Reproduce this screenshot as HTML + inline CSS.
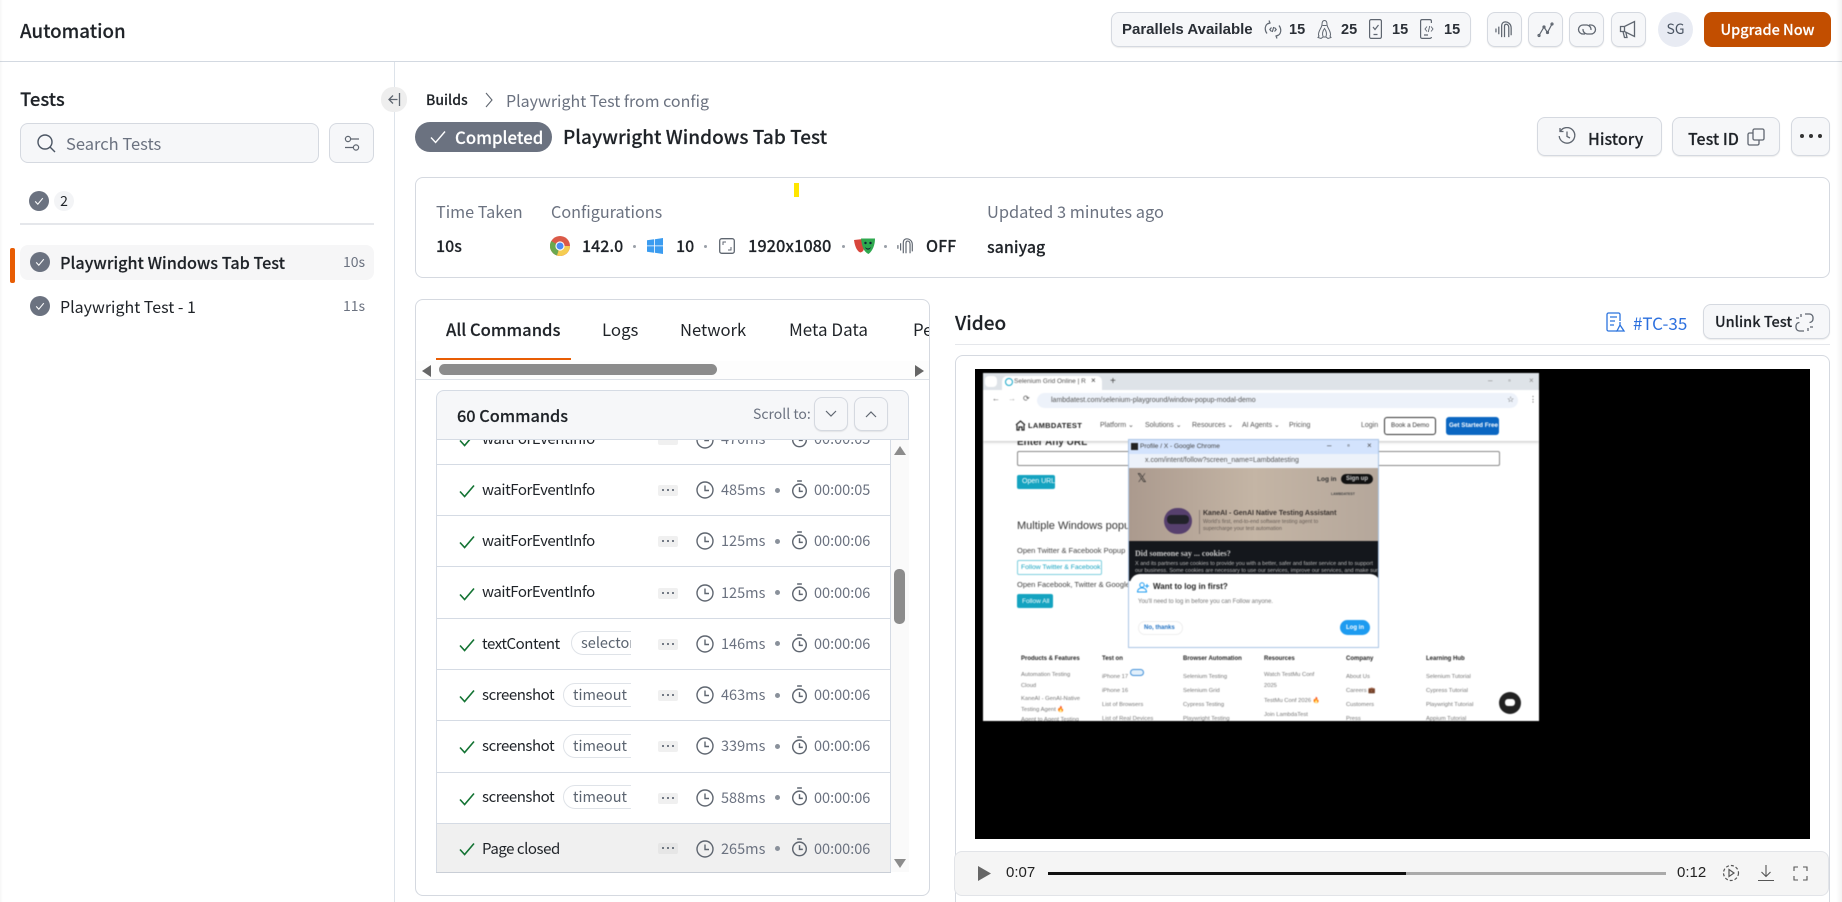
<!DOCTYPE html>
<html lang="en"><head><meta charset="utf-8"><title>Automation</title>
<style>
html,body{margin:0;padding:0;background:#fff;width:1842px;height:902px;overflow:hidden}
#root{position:absolute;left:0;top:0;width:1842px;height:902px;overflow:hidden;font-family:"Noto Sans CJK SC","Liberation Sans",sans-serif;color:#1f2328}
.a,.t,svg.i{position:absolute}
.t{white-space:nowrap;line-height:24px;height:24px;font-size:16px}
.m{font-weight:500;-webkit-text-stroke:.15px currentColor}
.g{color:#6b7280}
.n{font-size:15px;letter-spacing:-.45px}
.d{font-size:14.5px}
.box{position:absolute;box-sizing:border-box;border:1px solid #d5d9e0;border-radius:8px;background:#f6f7f9;box-shadow:0 1px 1px rgba(0,0,0,.08)}
.card{position:absolute;box-sizing:border-box;border:1px solid #d5d9e0;border-radius:8px;background:#fff}
.sep{position:absolute;left:436px;width:454px;height:1px;background:#d5dbe4}
.chip{position:absolute;height:24px;overflow:hidden}
.chip div{box-sizing:border-box;width:100px;height:24px;border:1px solid #dfe3e8;border-radius:12px;font-size:14.5px;line-height:22px;padding-left:9px;color:#5b6470}
.pill{position:absolute;left:658px;width:20px;height:11px;background:#f0f0f0;border-radius:2px}
.pill i{position:absolute;top:4px;width:2px;height:2px;border-radius:1px;background:#4b5563}
.bul{position:absolute;left:775px;width:5px;height:5px;border-radius:50%;background:#8a919b}
.v{font-family:"Liberation Sans",sans-serif;position:absolute;white-space:nowrap;line-height:1.1}
.pn{font-family:"Liberation Sans",sans-serif;position:absolute;top:21px;font-size:14.5px;font-weight:700;color:#2a2f36;line-height:18px}
</style></head><body><div id="root">
<svg width="0" height="0" style="position:absolute">
<symbol id="chk" viewBox="0 0 20 20"><circle cx="10" cy="10" r="10" fill="#6b7280"/><path d="M6.2 10.4l2.6 2.8 5-6" fill="none" stroke="#fff" stroke-width="1.1"/></symbol>
<symbol id="ok" viewBox="0 0 16 14"><path d="M1 7.5l4.6 5L15 1.5" fill="none" stroke="#137333" stroke-width="1.6"/></symbol>
<symbol id="clk" viewBox="0 0 18 18"><circle cx="9" cy="9" r="8" fill="none" stroke="#5f6670" stroke-width="1.4"/><path d="M9 4.5V9.5H13" fill="none" stroke="#5f6670" stroke-width="1.4"/></symbol>
<symbol id="tmr" viewBox="0 0 18 20"><circle cx="9" cy="11.5" r="7.2" fill="none" stroke="#5f6670" stroke-width="1.5"/><path d="M6.5 1h5M9 7.5V12h3.5" fill="none" stroke="#5f6670" stroke-width="1.5"/></symbol>
<symbol id="tun" viewBox="0 0 20 20"><g fill="none" stroke="#5f6670" stroke-width="1.3"><path d="M1 9v4M4 7v8M7 18V6.5C7 3 9 2 11 2s6 1.500 6 6.500V16M10 18V6.500C10 5 11 4.500 12 4.500s2.500 1 2.500 3.500V18"/></g></symbol>
</svg>

<!-- header -->
<div class="a" style="left:0;top:61px;width:1842px;height:1px;background:#d3d9e1"></div>
<div class="t m" style="left:20px;top:19px;font-size:18.7px">Automation</div>
<div class="box" style="left:1111px;top:12px;width:360px;height:35px;border-radius:8px"></div>
<div class="pn" style="left:1122px;font-size:15px">Parallels Available</div>
<svg class="i" style="left:1264px;top:19px" width="18" height="21" viewBox="0 0 18 20" fill="none" stroke="#5f6670" stroke-width="1.2"><path d="M3 14C0 10 1 5 5 3.500M5 1l1 2.500-2.500 1M15 6c3 4 2 9-2 10.500M13 19l-1-2.500 2.500-1M7.500 8L5.800 10l1.700 2M10.500 8L12.200 10l-1.700 2M9.700 7.500L8.300 12.500"/></svg>
<div class="pn" style="left:1289px">15</div>
<svg class="i" style="left:1317px;top:19px" width="15" height="21" viewBox="0 0 15 20" fill="none" stroke="#5f6670" stroke-width="1"><path d="M7.500 1C5.500 1 5 3 5 5c0 3-3.500 6-3.500 10 0 1 .5 1.500.5 1.500L1 18l3 1 2-1.500h3l2 1.500 3-1-1-1.500s.5-.5.5-1.500c0-4-3.500-7-3.500-10 0-2-.5-4-2.500-4z"/><path d="M5.500 6h4M6 17c-1-3 0-6 1.500-8 1.500 2 2.500 5 1.500 8"/></svg>
<div class="pn" style="left:1341px">25</div>
<svg class="i" style="left:1369px;top:19px" width="13" height="20" viewBox="0 0 13 20" fill="none" stroke="#5f6670" stroke-width="1.2"><rect x=".6" y=".6" width="11.800" height="18.800" rx="1.500"/><path d="M4 8l2 2.500 3.500-4.500M4.500 15.500h4"/></svg>
<div class="pn" style="left:1392px">15</div>
<svg class="i" style="left:1420px;top:19px" width="14" height="20" viewBox="0 0 14 20" fill="none" stroke="#5f6670" stroke-width="1.2"><path d="M10 .6H2A1.500 1.500 0 0 0 .6 2v16A1.500 1.500 0 0 0 2 19.400h8A1.500 1.500 0 0 0 11.400 18M11.400 4V2A1.500 1.500 0 0 0 10 .6M4 16h4"/><path d="M7 7.500L5 10l2 2.500M11 7.500l2 2.500-2 2.500M9.700 7l-1.400 6" stroke-width=".9"/></svg>
<div class="pn" style="left:1444px">15</div>

<div class="box" style="left:1487px;top:12px;width:35px;height:35px"></div>
<div class="box" style="left:1528px;top:12px;width:35px;height:35px"></div>
<div class="box" style="left:1569px;top:12px;width:35px;height:35px"></div>
<div class="box" style="left:1611px;top:12px;width:35px;height:35px"></div>
<svg class="i" style="left:1495px;top:20px" width="19" height="19"><use href="#tun"/></svg>
<svg class="i" style="left:1537px;top:21px" width="17" height="17" viewBox="0 0 17 17" fill="none" stroke="#5f6670" stroke-width="1.200"><path d="M2 14.500L7 6l3.500 5.500L15 3"/><circle cx="2" cy="14.500" r="1"/><circle cx="7" cy="6" r="1"/><circle cx="10.500" cy="11.500" r="1"/><circle cx="15" cy="3" r="1"/></svg>
<svg class="i" style="left:1577px;top:22px" width="20" height="15" viewBox="0 0 20 15" fill="none" stroke="#5f6670" stroke-width="1.300"><path d="M8 12H6A4.500 4.500 0 0 1 6 3h4a4.500 4.500 0 0 1 4 5"/><path d="M12 3h2a4.500 4.500 0 0 1 0 9h-4a4.500 4.500 0 0 1-4-5"/></svg>
<svg class="i" style="left:1619px;top:20px" width="20" height="19" viewBox="0 0 20 19" fill="none" stroke="#5f6670" stroke-width="1.300"><path d="M1.500 6.500v5h4l10 5V1.500l-10 5zM5.500 6.500v5M4 11.500l1.500 6h2.500L6.800 12"/></svg>

<div class="a" style="left:1658px;top:12px;width:35px;height:35px;border-radius:50%;background:#e8ebf3"></div>
<div class="t g" style="left:1658px;top:17px;width:35px;text-align:center;font-size:14px;color:#4b5563">SG</div>
<div class="a" style="left:1704px;top:12px;width:127px;height:35px;background:#c24e00;border-radius:8px"></div>
<div class="t m" style="left:1704px;top:18px;width:127px;text-align:center;color:#fff;font-size:14.500px">Upgrade Now</div>

<!-- sidebar -->
<div class="a" style="left:394px;top:62px;width:1px;height:840px;background:#dde3ea"></div>
<div class="t m" style="left:20px;top:87px;font-size:18.5px">Tests</div>
<div class="a" style="left:381px;top:87px;width:26px;height:25px;border-radius:12px;background:#eeeeee"></div>
<svg class="i" style="left:388px;top:93px" width="13" height="13" viewBox="0 0 13 13" fill="none" stroke="#5f6670" stroke-width="1.300"><path d="M11.500 0v13M9.500 6.500H1M5 2.500l-4 4 4 4"/></svg>
<div class="box" style="left:20px;top:123px;width:299px;height:40px;box-shadow:none"></div>
<svg class="i" style="left:36px;top:133px" width="20" height="20" viewBox="0 0 20 20" fill="none" stroke="#4b5563" stroke-width="1.400"><circle cx="9" cy="9" r="7"/><path d="M14 14l5 5"/></svg>
<div class="t g" style="left:66px;top:131px;font-size:16.5px">Search Tests</div>
<div class="box" style="left:329px;top:123px;width:45px;height:40px;box-shadow:none"></div>
<svg class="i" style="left:344px;top:135px" width="16" height="17" viewBox="0 0 16 17" fill="none" stroke="#5f6670" stroke-width="1.200"><circle cx="4" cy="4" r="2.600"/><path d="M7 4h8M1 12.500h8"/><circle cx="12" cy="12.500" r="2.600"/></svg>
<svg class="i" style="left:29px;top:191px" width="20" height="20"><use href="#chk"/></svg>
<div class="a" style="left:54px;top:191px;width:20px;height:20px;border-radius:50%;background:#f3f4f6"></div>
<div class="t" style="left:54px;top:189px;width:20px;text-align:center;font-size:14px">2</div>
<div class="a" style="left:20px;top:223px;width:354px;height:2px;background:#e5e7eb"></div>

<div class="a" style="left:20px;top:245px;width:354px;height:35px;border-radius:8px;background:#f6f6f7"></div>
<div class="a" style="left:10px;top:248px;width:5px;height:35px;border-radius:2px;background:#e85d04"></div>
<svg class="i" style="left:30px;top:252px" width="20" height="20"><use href="#chk"/></svg>
<div class="t m" style="left:60px;top:250px;font-size:16.2px">Playwright Windows Tab Test</div>
<div class="t g" style="left:343px;top:250px;font-size:14px">10s</div>
<svg class="i" style="left:30px;top:296px" width="20" height="20"><use href="#chk"/></svg>
<div class="t" style="left:60px;top:294px">Playwright Test - 1</div>
<div class="t g" style="left:343px;top:294px;font-size:14px">11s</div>

<!-- title area -->
<div class="t m" style="left:426px;top:88px;font-size:14px">Builds</div>
<svg class="i" style="left:485px;top:92px" width="8" height="16" viewBox="0 0 8 16" fill="none" stroke="#5f6670" stroke-width="1.100"><path d="M1 1l6 7-6 7"/></svg>
<div class="t g" style="left:506px;top:88px">Playwright Test from config</div>
<div class="a" style="left:415px;top:122px;width:137px;height:30px;border-radius:15px;background:#6b7280"></div>
<svg class="i" style="left:430px;top:130px" width="16" height="14" viewBox="0 0 16 14" fill="none" stroke="#fff" stroke-width="1.400"><path d="M1 7.500l4.600 5L15 1.500"/></svg>
<div class="t m" style="left:455px;top:125px;color:#fff;font-size:16.8px">Completed</div>
<div class="t m" style="left:563px;top:125px;font-size:19px">Playwright Windows Tab Test</div>

<div class="box" style="left:1537px;top:117px;width:125px;height:39px"></div>
<svg class="i" style="left:1558px;top:127px" width="18" height="18" viewBox="0 0 18 18" fill="none" stroke="#5f6670" stroke-width="1.300"><path d="M2.500 4A7.800 7.800 0 1 1 1.200 9M2 1v3.500h3.500M9 4.500v5l3 1.500"/></svg>
<div class="t m" style="left:1588px;top:126px">History</div>
<div class="box" style="left:1672px;top:117px;width:108px;height:39px"></div>
<div class="t m" style="left:1688px;top:126px">Test ID</div>
<svg class="i" style="left:1747px;top:128px" width="18" height="18" viewBox="0 0 18 18" fill="none" stroke="#5f6670" stroke-width="1.300"><rect x="6" y="1" width="11" height="11" rx="1.500"/><path d="M6 5H2.500A1.500 1.500 0 0 0 1 6.500v9A1.500 1.500 0 0 0 2.500 17h8a1.500 1.500 0 0 0 1.500-1.500V12"/></svg>
<div class="box" style="left:1791px;top:117px;width:39px;height:39px"></div>
<div class="a" style="left:1800px;top:134px;width:4px;height:4px;border-radius:50%;background:#333"></div>
<div class="a" style="left:1809px;top:134px;width:4px;height:4px;border-radius:50%;background:#333"></div>
<div class="a" style="left:1818px;top:134px;width:4px;height:4px;border-radius:50%;background:#333"></div>

<!-- config card -->
<div class="card" style="left:415px;top:177px;width:1415px;height:101px"></div>
<div class="a" style="left:794px;top:183px;width:5px;height:14px;background:#ffe600"></div>
<div class="t g" style="left:436px;top:199px;font-size:16.2px">Time Taken</div>
<div class="t g" style="left:551px;top:199px;font-size:16.2px">Configurations</div>
<div class="t g" style="left:987px;top:199px;font-size:16.4px">Updated 3 minutes ago</div>
<div class="t m" style="left:436px;top:233px">10s</div>
<svg class="i" style="left:550px;top:236px" width="20" height="20" viewBox="0 0 20 20"><circle cx="10" cy="10" r="10" fill="#db5a48"/><path d="M10 10L1.200 5A10 10 0 0 0 7 19.500z" fill="#6aa84f"/><path d="M10 10L7 19.500A10 10 0 0 0 20 10z" fill="#f5cd52"/><circle cx="10" cy="10" r="4.600" fill="#fff"/><circle cx="10" cy="10" r="3.500" fill="#4c8bf5"/></svg>
<div class="t m" style="left:582px;top:233px">142.0</div>
<div class="a" style="left:633px;top:245px;width:3px;height:3px;border-radius:50%;background:#9aa0a8"></div>
<svg class="i" style="left:647px;top:238px" width="16" height="16" viewBox="0 0 16 16" fill="#3b9cf0"><path d="M0 2.300L7 1.300V7.500H0zM7.800 1.200L16 0V7.500H7.800zM0 8.300H7V14.700L0 13.700zM7.800 8.300H16V16L7.800 14.800z"/></svg>
<div class="t m" style="left:676px;top:233px">10</div>
<div class="a" style="left:704px;top:245px;width:3px;height:3px;border-radius:50%;background:#9aa0a8"></div>
<svg class="i" style="left:719px;top:238px" width="16" height="16" viewBox="0 0 16 16" fill="none" stroke="#5f6670" stroke-width="1.300"><rect x=".7" y=".7" width="14.600" height="14.600" rx="2"/><path d="M4 7V4h3M12 9v3H9" stroke-width="1"/></svg>
<div class="t m" style="left:748px;top:233px;font-size:16.4px">1920x1080</div>
<div class="a" style="left:842px;top:245px;width:3px;height:3px;border-radius:50%;background:#9aa0a8"></div>
<svg class="i" style="left:854px;top:237px" width="21" height="18" viewBox="0 0 21 18"><path d="M0 3l9-1 1 9c0 3-2 4-3.500 4.500C4 15 1 11 0 3z" fill="#d8453b"/><path d="M7 1.500l14 0c0 6-2 12-6.500 15.500C10 15 8 10 7 1.500z" fill="#2fa84f"/><circle cx="11.500" cy="6" r="1.200" fill="#123"/><circle cx="16.500" cy="6" r="1.200" fill="#123"/><path d="M11 10c2 2 4 2 6 0-1 3.500-5 3.500-6 0z" fill="#123"/></svg>
<div class="a" style="left:884px;top:245px;width:3px;height:3px;border-radius:50%;background:#9aa0a8"></div>
<svg class="i" style="left:897px;top:237px" width="18" height="18"><use href="#tun"/></svg>
<div class="t m" style="left:926px;top:233px">OFF</div>
<div class="t m" style="left:987px;top:234px">saniyag</div>

<!-- commands panel -->
<div class="card" style="left:415px;top:299px;width:515px;height:597px"></div>
<div class="t m" style="left:446px;top:317px;font-size:16.6px">All Commands</div>
<div class="t" style="left:602px;top:317px;font-size:16.8px">Logs</div>
<div class="t" style="left:680px;top:317px;font-size:16.6px">Network</div>
<div class="t" style="left:789px;top:317px;font-size:17px">Meta Data</div>
<div class="a" style="left:913px;top:317px;width:16px;height:24px;overflow:hidden"><div class="t" style="left:0;top:0;font-size:16.8px">Performance</div></div>
<div class="a" style="left:436px;top:358px;width:135px;height:2px;background:#e85d04"></div>
<div class="a" style="left:416px;top:361px;width:513px;height:18px;background:#fdfdfd"></div>
<svg class="i" style="left:422px;top:365px" width="10" height="12"><path d="M9 0v12L0 6z" fill="#666"/></svg>
<div class="a" style="left:439px;top:364px;width:278px;height:11px;border-radius:6px;background:#8c8c8c"></div>
<svg class="i" style="left:915px;top:365px" width="10" height="12"><path d="M0 0v12l9-6z" fill="#666"/></svg>
<div class="a" style="left:416px;top:379px;width:513px;height:1px;background:#dde1e7"></div>

<!-- list -->
<div class="a" style="left:890px;top:439px;width:19px;height:433px;background:#fafafa"></div>
<div class="a" style="left:890px;top:439px;width:1px;height:433px;background:#d5dbe4"></div>
<div class="a" style="left:436px;top:439px;width:1px;height:433px;background:#d5dbe4"></div>
<svg class="i" style="left:894px;top:446px" width="12" height="9"><path d="M6 0l6 9H0z" fill="#8c8c8c"/></svg>
<div class="a" style="left:894px;top:569px;width:11px;height:55px;border-radius:5px;background:#8c8c8c"></div>
<svg class="i" style="left:894px;top:859px" width="12" height="9"><path d="M0 0h12L6 9z" fill="#8c8c8c"/></svg>

<div class="a" style="left:437px;top:824px;width:453px;height:48px;background:#f0f0f0"></div>
<div class="sep" style="top:464px"></div><div class="sep" style="top:515px"></div><div class="sep" style="top:566px"></div><div class="sep" style="top:618px"></div><div class="sep" style="top:669px"></div><div class="sep" style="top:720px"></div><div class="sep" style="top:772px"></div><div class="sep" style="top:823px"></div><div class="sep" style="top:872px;width:455px;background:#c9ced6"></div>

<!-- partial row -->
<svg class="i" style="left:459px;top:433px" width="16" height="14"><use href="#ok"/></svg>
<div class="t n" style="left:482px;top:427px">waitForEventInfo</div>
<div class="pill" style="top:434px"></div>
<svg class="i" style="left:696px;top:431px" width="18" height="18"><use href="#clk"/></svg>
<div class="t g d" style="left:721px;top:427px">470ms</div>
<svg class="i" style="left:791px;top:429px" width="17" height="19"><use href="#tmr"/></svg>
<div class="t g d" style="left:814px;top:427px">00:00:05</div>

<!-- row 1 -->
<svg class="i" style="left:459px;top:484px" width="16" height="14"><use href="#ok"/></svg>
<div class="t n" style="left:482px;top:478px">waitForEventInfo</div>
<div class="pill" style="top:485px"><i style="left:4px"></i><i style="left:9px"></i><i style="left:14px"></i></div>
<svg class="i" style="left:696px;top:481px" width="18" height="18"><use href="#clk"/></svg>
<div class="t g d" style="left:721px;top:478px">485ms</div>
<div class="bul" style="top:488px"></div>
<svg class="i" style="left:791px;top:480px" width="17" height="19"><use href="#tmr"/></svg>
<div class="t g d" style="left:814px;top:478px">00:00:05</div>
<!-- row 2 -->
<svg class="i" style="left:459px;top:535px" width="16" height="14"><use href="#ok"/></svg>
<div class="t n" style="left:482px;top:529px">waitForEventInfo</div>
<div class="pill" style="top:536px"><i style="left:4px"></i><i style="left:9px"></i><i style="left:14px"></i></div>
<svg class="i" style="left:696px;top:532px" width="18" height="18"><use href="#clk"/></svg>
<div class="t g d" style="left:721px;top:529px">125ms</div>
<div class="bul" style="top:539px"></div>
<svg class="i" style="left:791px;top:531px" width="17" height="19"><use href="#tmr"/></svg>
<div class="t g d" style="left:814px;top:529px">00:00:06</div>
<!-- row 3 -->
<svg class="i" style="left:459px;top:587px" width="16" height="14"><use href="#ok"/></svg>
<div class="t n" style="left:482px;top:580px">waitForEventInfo</div>
<div class="pill" style="top:588px"><i style="left:4px"></i><i style="left:9px"></i><i style="left:14px"></i></div>
<svg class="i" style="left:696px;top:584px" width="18" height="18"><use href="#clk"/></svg>
<div class="t g d" style="left:721px;top:581px">125ms</div>
<div class="bul" style="top:590px"></div>
<svg class="i" style="left:791px;top:583px" width="17" height="19"><use href="#tmr"/></svg>
<div class="t g d" style="left:814px;top:581px">00:00:06</div>
<!-- row 4 -->
<svg class="i" style="left:459px;top:638px" width="16" height="14"><use href="#ok"/></svg>
<div class="t n" style="left:482px;top:632px">textContent</div>
<div class="chip" style="left:571px;top:631px;width:60px"><div>selector</div></div>
<div class="pill" style="top:639px"><i style="left:4px"></i><i style="left:9px"></i><i style="left:14px"></i></div>
<svg class="i" style="left:696px;top:635px" width="18" height="18"><use href="#clk"/></svg>
<div class="t g d" style="left:721px;top:632px">146ms</div>
<div class="bul" style="top:641px"></div>
<svg class="i" style="left:791px;top:634px" width="17" height="19"><use href="#tmr"/></svg>
<div class="t g d" style="left:814px;top:632px">00:00:06</div>
<!-- row 5 -->
<svg class="i" style="left:459px;top:689px" width="16" height="14"><use href="#ok"/></svg>
<div class="t n" style="left:482px;top:683px">screenshot</div>
<div class="chip" style="left:563px;top:683px;width:68px"><div>timeout</div></div>
<div class="pill" style="top:690px"><i style="left:4px"></i><i style="left:9px"></i><i style="left:14px"></i></div>
<svg class="i" style="left:696px;top:686px" width="18" height="18"><use href="#clk"/></svg>
<div class="t g d" style="left:721px;top:683px">463ms</div>
<div class="bul" style="top:693px"></div>
<svg class="i" style="left:791px;top:685px" width="17" height="19"><use href="#tmr"/></svg>
<div class="t g d" style="left:814px;top:683px">00:00:06</div>
<!-- row 6 -->
<svg class="i" style="left:459px;top:740px" width="16" height="14"><use href="#ok"/></svg>
<div class="t n" style="left:482px;top:734px">screenshot</div>
<div class="chip" style="left:563px;top:734px;width:68px"><div>timeout</div></div>
<div class="pill" style="top:741px"><i style="left:4px"></i><i style="left:9px"></i><i style="left:14px"></i></div>
<svg class="i" style="left:696px;top:737px" width="18" height="18"><use href="#clk"/></svg>
<div class="t g d" style="left:721px;top:734px">339ms</div>
<div class="bul" style="top:744px"></div>
<svg class="i" style="left:791px;top:736px" width="17" height="19"><use href="#tmr"/></svg>
<div class="t g d" style="left:814px;top:734px">00:00:06</div>
<!-- row 7 -->
<svg class="i" style="left:459px;top:792px" width="16" height="14"><use href="#ok"/></svg>
<div class="t n" style="left:482px;top:785px">screenshot</div>
<div class="chip" style="left:563px;top:785px;width:68px"><div>timeout</div></div>
<div class="pill" style="top:793px"><i style="left:4px"></i><i style="left:9px"></i><i style="left:14px"></i></div>
<svg class="i" style="left:696px;top:789px" width="18" height="18"><use href="#clk"/></svg>
<div class="t g d" style="left:721px;top:786px">588ms</div>
<div class="bul" style="top:795px"></div>
<svg class="i" style="left:791px;top:787px" width="17" height="19"><use href="#tmr"/></svg>
<div class="t g d" style="left:814px;top:786px">00:00:06</div>
<!-- row 8 -->
<svg class="i" style="left:459px;top:842px" width="16" height="14"><use href="#ok"/></svg>
<div class="t n" style="left:482px;top:837px">Page closed</div>
<div class="pill" style="top:843px;background:#e6e6e6"><i style="left:4px"></i><i style="left:9px"></i><i style="left:14px"></i></div>
<svg class="i" style="left:696px;top:840px" width="18" height="18"><use href="#clk"/></svg>
<div class="t g d" style="left:721px;top:837px">265ms</div>
<div class="bul" style="top:846px"></div>
<svg class="i" style="left:791px;top:838px" width="17" height="19"><use href="#tmr"/></svg>
<div class="t g d" style="left:814px;top:837px">00:00:06</div>

<!-- commands header -->
<div class="a" style="box-sizing:border-box;left:436px;top:390px;width:473px;height:50px;background:#f6f7f9;border:1px solid #d5dbe4;border-radius:8px 8px 0 0"></div>
<div class="t m" style="left:457px;top:403px;font-size:16.3px">60 Commands</div>
<div class="t g" style="left:753px;top:402px;font-size:14px">Scroll to:</div>
<div class="box" style="left:814px;top:397px;width:34px;height:34px"></div>
<div class="box" style="left:854px;top:397px;width:34px;height:34px"></div>
<svg class="i" style="left:825px;top:410px" width="12" height="8" fill="none" stroke="#5f6670" stroke-width="1.200"><path d="M1 1l5 5 5-5"/></svg>
<svg class="i" style="left:865px;top:410px" width="12" height="8" fill="none" stroke="#5f6670" stroke-width="1.200"><path d="M1 7l5-5 5 5"/></svg>

<!-- video header -->
<div class="t m" style="left:955px;top:311px;font-size:19px">Video</div>
<svg class="i" style="left:1606px;top:312px" width="20" height="20" viewBox="0 0 20 20" fill="none" stroke="#2b73de" stroke-width="1.300"><path d="M11 19H2.500A1.500 1.500 0 0 1 1 17.500V2.500A1.500 1.500 0 0 1 2.500 1h10A1.500 1.500 0 0 1 14 2.500V9M4 5h7M4 9h5M4 13h4"/><path d="M14 10v3l4 6h-7l3-6" /></svg>
<div class="t" style="left:1633px;top:311px;color:#2b6fde;font-size:17px">#TC-35</div>
<div class="box" style="left:1703px;top:304px;width:127px;height:35px"></div>
<div class="t m" style="left:1715px;top:310px;font-size:14.500px">Unlink Test</div>
<svg class="i" style="left:1795px;top:313px" width="19" height="19" viewBox="0 0 19 19" fill="none" stroke="#5f6670" stroke-width="1.300"><path d="M10 1h4.500a3.500 3.500 0 0 1 3.500 3.500V6a3.500 3.500 0 0 1-3.500 3.500M9 18H4.500A3.500 3.500 0 0 1 1 14.500V13a3.500 3.500 0 0 1 3.500-3.500M6 1v3M1 5h3M13 15v3M15 14h3" /></svg>
<div class="a" style="left:955px;top:344px;width:875px;height:1px;background:#e5e7eb"></div>
<div class="card" style="left:955px;top:355px;width:875px;height:560px"></div>

<!-- video -->
<div class="a" style="left:975px;top:369px;width:835px;height:470px;background:#000;overflow:hidden">
<div class="a" style="left:8px;top:4px;width:556px;height:348px;background:#fff;overflow:hidden;filter:blur(.4px)">
 <div class="v" style="left:34px;top:64px;font-size:10px;font-weight:700;color:#333">Enter Any URL</div>
 <div class="a" style="left:0;top:0;width:556px;height:68px;background:#fff;box-shadow:0 1px 3px rgba(0,0,0,.25)"></div>
 <div class="a" style="left:0;top:0;width:556px;height:17px;background:#dee3e8"></div>
 <div class="a" style="left:19px;top:3px;width:100px;height:14px;background:#fff;border-radius:5px 5px 0 0"></div>
 <div class="a" style="left:2px;top:3px;width:12px;height:11px;background:#fff;border-radius:4px"></div>
 <div class="a" style="left:22px;top:5px;width:8px;height:8px;border:1px solid #15a7c9;border-radius:50%;box-sizing:border-box"></div>
 <div class="a" style="left:31px;top:4px;width:72px;height:10px;overflow:hidden"><div class="v" style="left:0;top:1px;font-size:6.500px;color:#555">Selenium Grid Online | Run Selenium</div></div>
 <div class="v" style="left:108px;top:4px;font-size:8px;color:#333">×</div>
 <div class="v" style="left:127px;top:3px;font-size:10px;color:#444">+</div>
 <div class="v" style="left:505px;top:4px;font-size:8px;color:#888">–</div>
 <div class="v" style="left:525px;top:4px;font-size:8px;color:#888">▫</div>
 <div class="v" style="left:546px;top:4px;font-size:8px;color:#888">×</div>
 <div class="a" style="left:54px;top:20px;width:481px;height:15px;background:#edf2fa;border-radius:8px"></div>
 <div class="v" style="left:9px;top:22px;font-size:8px;color:#555">←</div>
 <div class="v" style="left:25px;top:22px;font-size:8px;color:#aaa">→</div>
 <div class="v" style="left:40px;top:22px;font-size:8px;color:#555">⟳</div>
 <div class="v" style="left:68px;top:24px;font-size:7px;color:#555">lambdatest.com/selenium-playground/window-popup-modal-demo</div>
 <div class="v" style="left:524px;top:23px;font-size:8px;color:#444">☆</div>
 <div class="v" style="left:546px;top:23px;font-size:8px;color:#444">⋮</div>
 <svg class="i" style="left:32px;top:47px" width="11" height="11" fill="none" stroke="#222" stroke-width="1.200"><path d="M1 5l4.500-4L10 5M2 5v5h2V7h3v3h2V5"/></svg>
 <div class="v" style="left:45px;top:49px;font-size:7.500px;font-weight:700;color:#222;letter-spacing:.3px">LAMBDATEST</div>
 <div class="v" style="left:117px;top:49px;font-size:7px;color:#555">Platform ⌄</div>
 <div class="v" style="left:162px;top:49px;font-size:7px;color:#555">Solutions ⌄</div>
 <div class="v" style="left:209px;top:49px;font-size:7px;color:#555">Resources ⌄</div>
 <div class="v" style="left:259px;top:49px;font-size:7px;color:#555">AI Agents ⌄</div>
 <div class="v" style="left:306px;top:49px;font-size:7px;color:#555">Pricing</div>
 <div class="v" style="left:378px;top:49px;font-size:7px;color:#555">Login</div>
 <div class="a" style="left:401px;top:44px;width:52px;height:18px;border:1px solid #333;border-radius:3px;box-sizing:border-box"></div>
 <div class="v" style="left:408px;top:50px;font-size:6.300px;color:#333">Book a Demo</div>
 <div class="a" style="left:463px;top:44px;width:53px;height:18px;background:#0a66c2;border-radius:3px"></div>
 <div class="v" style="left:466px;top:50px;font-size:6.300px;color:#fff;font-weight:700">Get Started Free</div>
 <div class="a" style="left:34px;top:78px;width:483px;height:15px;border:1px solid #888;border-radius:2px;box-sizing:border-box"></div>
 <div class="a" style="left:34px;top:102px;width:38px;height:14px;background:#14a3c0;border-radius:2px"></div>
 <div class="v" style="left:39px;top:105px;font-size:7px;color:#fff">Open URL</div>
 <div class="v" style="left:34px;top:147px;font-size:11px;color:#333">Multiple Windows popup</div>
 <div class="v" style="left:34px;top:174px;font-size:7.500px;color:#444">Open Twitter &amp; Facebook Popup</div>
 <div class="a" style="left:34px;top:187px;width:85px;height:15px;border:1px solid #7fcfdf;border-radius:2px;box-sizing:border-box"></div>
 <div class="v" style="left:38px;top:191px;font-size:6.800px;color:#14a3c0">Follow Twitter &amp; Facebook</div>
 <div class="v" style="left:34px;top:208px;font-size:7.500px;color:#444">Open Facebook, Twitter &amp; Google</div>
 <div class="a" style="left:34px;top:221px;width:36px;height:14px;background:#14a3c0;border-radius:2px"></div>
 <div class="v" style="left:39px;top:225px;font-size:6.500px;color:#fff">Follow All</div>
 <!-- footer -->
 <div class="v" style="left:38px;top:283px;font-size:6px;color:#222;font-weight:700">Products &amp; Features</div>
 <div class="v" style="left:38px;top:297px;font-size:5.800px;color:#777;line-height:10.500px">Automation Testing<br>Cloud</div>
 <div class="v" style="left:38px;top:321px;font-size:5.800px;color:#777;line-height:10.500px">KaneAI - GenAI-Native<br>Testing Agent 🔥<br>Agent to Agent Testing</div>
 <div class="v" style="left:119px;top:283px;font-size:6px;color:#222;font-weight:700">Test on</div>
 <div class="v" style="left:119px;top:297px;font-size:5.800px;color:#777;line-height:14px">iPhone 17<br>iPhone 16<br>List of Browsers<br>List of Real Devices</div>
 <div class="a" style="left:147px;top:296px;width:14px;height:7px;border:1px solid #3f8fd8;border-radius:4px;box-sizing:border-box;background:#e3f0fb"></div>
 <div class="v" style="left:200px;top:283px;font-size:6px;color:#222;font-weight:700">Browser Automation</div>
 <div class="v" style="left:200px;top:297px;font-size:5.800px;color:#777;line-height:14px">Selenium Testing<br>Selenium Grid<br>Cypress Testing<br>Playwright Testing</div>
 <div class="v" style="left:281px;top:283px;font-size:6px;color:#222;font-weight:700">Resources</div>
 <div class="v" style="left:281px;top:297px;font-size:5.800px;color:#777;line-height:10.500px">Watch TestMu Conf<br>2025</div>
 <div class="v" style="left:281px;top:321px;font-size:5.800px;color:#777;line-height:14px">TestMu Conf 2026 🔥<br>Join LambdaTest<br>Engineers</div>
 <div class="v" style="left:363px;top:283px;font-size:6px;color:#222;font-weight:700">Company</div>
 <div class="v" style="left:363px;top:297px;font-size:5.800px;color:#777;line-height:14px">About Us<br>Careers 💼<br>Customers<br>Press</div>
 <div class="v" style="left:443px;top:283px;font-size:6px;color:#222;font-weight:700">Learning Hub</div>
 <div class="v" style="left:443px;top:297px;font-size:5.800px;color:#777;line-height:14px">Selenium Tutorial<br>Cypress Tutorial<br>Playwright Tutorial<br>Appium Tutorial</div>
 <div class="a" style="left:516px;top:319px;width:22px;height:22px;border-radius:50%;background:#222"></div>
 <div class="a" style="left:522px;top:326px;width:10px;height:7px;border-radius:3px;background:#fff"></div>
 <!-- popup -->
 <div class="a" style="left:145px;top:66px;width:251px;height:209px;background:#fff;border:1px solid #a9c4e4;box-sizing:border-box;overflow:hidden">
  <div class="a" style="left:0;top:0;width:251px;height:14px;background:#d3e3fd"></div>
  <div class="a" style="left:2px;top:3px;width:7px;height:7px;background:#222"></div>
  <div class="v" style="left:11px;top:3px;font-size:6.500px;color:#444">Profile / X - Google Chrome</div>
  <div class="v" style="left:198px;top:2px;font-size:8px;color:#444">–</div>
  <div class="v" style="left:218px;top:2px;font-size:8px;color:#444">▫</div>
  <div class="v" style="left:238px;top:2px;font-size:8px;color:#444">×</div>
  <div class="a" style="left:0;top:14px;width:251px;height:14px;background:#edf2fa"></div>
  <div class="v" style="left:16px;top:17px;font-size:7px;color:#555">x.com/intent/follow?screen_name=Lambdatesting</div>
  <div class="a" style="left:0;top:28px;width:251px;height:73px;background:linear-gradient(90deg,#ab9a8e,#c4b5a5 50%,#b5a79b)"></div>
  <div class="v" style="left:8px;top:32px;font-size:12px;color:#222">𝕏</div>
  <div class="v" style="left:188px;top:36px;font-size:6.500px;color:#333;font-weight:700">Log in</div>
  <div class="a" style="left:212px;top:34px;width:32px;height:10px;background:#111;border-radius:6px"></div>
  <div class="v" style="left:217px;top:36px;font-size:6px;color:#ccc;font-weight:700">Sign up</div>
  <div class="v" style="left:202px;top:53px;font-size:3.500px;color:#444;font-weight:700">LAMBDATEST</div>
  <div class="a" style="left:35px;top:68px;width:28px;height:26px;border-radius:13px;background:#57406e"></div>
  <div class="a" style="left:38px;top:75px;width:22px;height:9px;border-radius:4px;background:#22222a"></div>
  <div class="a" style="left:70px;top:70px;width:1px;height:24px;background:#8d8078"></div>
  <div class="v" style="left:74px;top:70px;font-size:7px;font-weight:700;color:#3a3330">KaneAI - GenAI Native Testing Assistant</div>
  <div class="v" style="left:74px;top:79px;font-size:5.300px;color:#665c55;line-height:7px">World's first, end-to-end software testing agent to<br>supercharge your test automation</div>
  <div class="a" style="left:0;top:101px;width:251px;height:40px;background:#14171c"></div>
  <div class="v" style="left:6px;top:110px;font-size:8px;font-weight:700;color:#ccc;font-family:'Liberation Serif',serif">Did someone say ... cookies?</div>
  <div class="v" style="left:6px;top:121px;font-size:5.500px;color:#bbb;line-height:7px">X and its partners use cookies to provide you with a better, safer and faster service and to support<br>our business. Some cookies are necessary to use our services, improve our services, and make sure</div>
  <div class="a" style="left:1px;top:134px;width:250px;height:80px;background:#fff;border-radius:10px 10px 0 0"></div>
  <div class="v" style="left:24px;top:143px;font-size:8px;font-weight:700;color:#222">Want to log in first?</div>
  <svg class="i" style="left:8px;top:142px" width="13" height="11" fill="none" stroke="#1d9bf0"><circle cx="5" cy="3" r="2.200"/><path d="M.5 10c0-5.500 9-5.500 9 0zM10 2v4M8 4h4"/></svg>
  <div class="v" style="left:9px;top:159px;font-size:6px;color:#777">You'll need to log in before you can Follow anyone.</div>
  <div class="a" style="left:9px;top:181px;width:45px;height:14px;border:1px solid #eee;border-radius:7px;box-sizing:border-box"></div>
  <div class="v" style="left:15px;top:185px;font-size:6px;font-weight:700;color:#1d6fc2">No, thanks</div>
  <div class="a" style="left:211px;top:180px;width:30px;height:15px;background:#1d9bf0;border-radius:8px"></div>
  <div class="v" style="left:217px;top:185px;font-size:6px;font-weight:700;color:#fff">Log in</div>
 </div>
</div>
</div>

<!-- controls -->
<div class="a" style="box-sizing:border-box;left:954px;top:851px;width:875px;height:45px;background:#f5f5f5;border:1px solid #e2e4e8;border-radius:8px"></div>
<svg class="i" style="left:978px;top:866px" width="13" height="15"><path d="M0 0l13 7.500L0 15z" fill="#666"/></svg>
<div class="v" style="left:1006px;top:865px;font-size:15px;color:#222">0:07</div>
<div class="a" style="left:1048px;top:872px;width:618px;height:3px;background:#aaa"></div>
<div class="a" style="left:1048px;top:872px;width:358px;height:3px;background:#111"></div>
<div class="v" style="left:1677px;top:865px;font-size:15px;color:#222">0:12</div>
<svg class="i" style="left:1722px;top:864px" width="18" height="18" fill="none" stroke="#555" stroke-width="1.200"><circle cx="9" cy="9" r="7.500" stroke-dasharray="3 2"/><path d="M7 5.500l5 3.500-5 3.500z"/></svg>
<svg class="i" style="left:1757px;top:864px" width="18" height="18" fill="none" stroke="#555" stroke-width="1.100"><path d="M9 1v11M4.500 8l4.500 4.500L13.500 8M1 16.500h16"/></svg>
<svg class="i" style="left:1793px;top:866px" width="15" height="15" fill="none" stroke="#555" stroke-width="1.100"><path d="M1 5V1h4M10 1h4v4M14 10v4h-4M5 14H1v-4"/></svg>

<div class="a" style="left:1836px;top:0;width:6px;height:902px;background:linear-gradient(90deg,rgba(0,0,0,0),rgba(0,0,0,.05))"></div>
<div class="a" style="left:0;top:0;width:3px;height:902px;background:linear-gradient(90deg,rgba(0,0,0,.03),rgba(0,0,0,0))"></div>
</div></body></html>
